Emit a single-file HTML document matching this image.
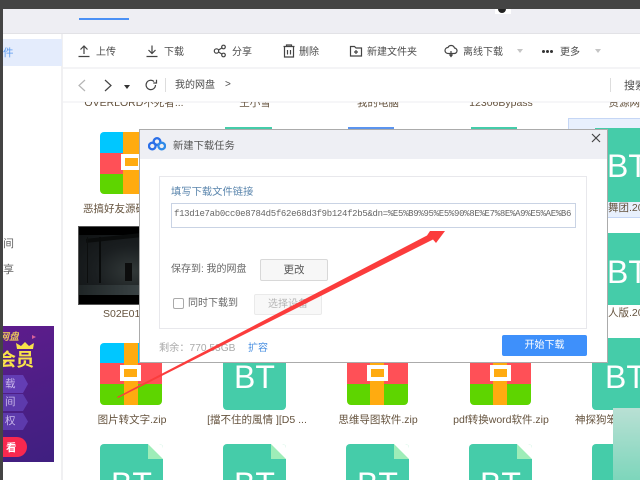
<!DOCTYPE html>
<html lang="zh">
<head>
<meta charset="utf-8">
<title>新建下载任务</title>
<style>
html,body{margin:0;padding:0;background:#fff;overflow:hidden;width:640px;height:480px}
#p{position:relative;width:640px;height:480px;overflow:hidden;background:#fff;font-family:"Liberation Sans","Noto Sans CJK SC",sans-serif;font-size:10px;color:#4c4c4c;filter:blur(.3px)}
#p div,#p span,#p svg{position:absolute}
#p span{white-space:nowrap;line-height:14px}
.lb{color:#65533e;font-size:10.5px;text-align:center;white-space:nowrap;line-height:14px}
.bt{background:#45cca9;border-radius:4px;color:#fff;overflow:hidden;font-size:32px;line-height:44px;text-align:center}
.fold{position:absolute;right:0;top:0;width:0;height:0;border-style:solid;border-width:0 15px 15px 0;border-color:#fff #fff #9eedb8 #9eedb8}
.btc{left:0;top:18px;width:63px;height:18px;overflow:hidden}
.ic{stroke:#444;fill:none;stroke-width:1.2}
.z{border-radius:4px;overflow:hidden;height:62px}
.z .a{left:0;top:0;width:100%;height:21px;background:#00c7ff}
.z .b{left:0;top:21px;width:100%;height:21px;background:#ff5057}
.z .c{left:0;top:42px;width:100%;height:20px;background:#5ed500}
.z .d{left:23px;top:0;width:14px;height:62px;background:#ffab10}
.z .e{left:20px;top:22px;width:21px;height:16px;background:#ffab10;box-sizing:border-box;border:4px solid #fff}
</style>
</head>
<body>
<div id="p">
<div style="left:0;top:0;width:640px;height:9px;background:#444"></div>
<div style="left:0;top:0;width:3px;height:480px;background:#444"></div>
<div style="left:3px;top:9px;width:637px;height:24px;background:#eeeef3"></div>
<div style="left:79px;top:18px;width:50px;height:2px;background:#4a90f5"></div>
<div style="left:495px;top:9px;width:16px;height:5px;background:#fff"></div>
<div style="left:498px;top:9px;width:8px;height:4px;background:#222;border-radius:0 0 4px 4px"></div>
<div style="left:3px;top:33px;width:637px;height:1px;background:#e2e2e6"></div>

<!-- sidebar -->
<div style="left:61px;top:34px;width:2px;height:446px;background:#f0f0f2"></div>
<div style="left:3px;top:39px;width:59px;height:27px;background:#e4ecfc"></div>
<span style="left:3px;top:46px;font-size:10.5px;color:#5b9bf0;width:11px;overflow:hidden">件</span>
<span style="left:3px;top:237px;width:11px;overflow:hidden;font-size:11px;color:#666">间</span>
<span style="left:3px;top:263px;width:11px;overflow:hidden;font-size:11px;color:#666">享</span>

<!-- ad -->
<div style="left:3px;top:326px;width:51px;height:136px;background:linear-gradient(160deg,#5e1c8c,#4b1f85 55%,#3f1f80)"></div>
<div style="left:3px;top:331px;width:16px;height:14px;overflow:hidden"><span style="left:-4px;top:0;font-size:10px;font-weight:bold;color:#e8c35c;font-style:italic">网盘</span></div>
<div style="left:32px;top:335px;border-left:4px solid #d9609a;border-top:2px solid transparent;border-bottom:2px solid transparent;width:0;height:0"></div>
<div style="left:3px;top:344px;width:31px;height:30px;overflow:hidden"><span style="left:-7px;top:4px;font-size:18px;font-weight:bold;color:#f8e34a;line-height:24px;padding-left:2px">会员</span></div>
<svg style="left:15px;top:341px" width="20" height="9" viewBox="0 0 20 9"><path d="M2 8L1 2l5 3 4-4 4 4 5-3-1 6z" fill="#f8e34a"/></svg>
<div style="left:3px;top:375px;width:25px;height:18px;background:#633db4;clip-path:polygon(0 0,80% 0,100% 50%,80% 100%,0 100%)"></div>
<div style="left:3px;top:394px;width:25px;height:17px;background:#5d3aac;clip-path:polygon(0 0,80% 0,100% 50%,80% 100%,0 100%)"></div>
<div style="left:3px;top:413px;width:25px;height:17px;background:#5d3aac;clip-path:polygon(0 0,80% 0,100% 50%,80% 100%,0 100%)"></div>
<span style="left:5px;top:377px;font-size:10.5px;color:#c9b8ea">载</span>
<span style="left:5px;top:395px;font-size:10.5px;color:#c9b8ea">间</span>
<span style="left:5px;top:414px;font-size:10.5px;color:#c9b8ea">权</span>
<div style="left:3px;top:437px;width:24px;height:20px;background:#f8284f;border-radius:0 10px 10px 0"></div>
<span style="left:6px;top:441px;font-size:10.5px;font-weight:bold;color:#fff">看</span>

<!-- toolbar -->
<div style="left:63px;top:67px;width:577px;height:2px;background:#f4f4f6"></div>
<div style="left:63px;top:101px;width:577px;height:2px;background:#f6f6f8"></div>
<svg style="left:77px;top:44px" width="14" height="14" viewBox="0 0 14 14"><path class="ic" d="M7 10V2M3.500 5.500L7 2l3.500 3.500M1.500 12.500h11"/></svg>
<span style="left:96px;top:46px">上传</span>
<svg style="left:145px;top:44px" width="14" height="14" viewBox="0 0 14 14"><path class="ic" d="M7 1.500V9M3.500 6L7 9.500 10.500 6M1.500 12.500h11"/></svg>
<span style="left:164px;top:46px">下载</span>
<svg style="left:213px;top:44px" width="14" height="14" viewBox="0 0 14 14"><circle class="ic" cx="3.500" cy="7" r="2.200"/><circle class="ic" cx="10.500" cy="3" r="1.800"/><circle class="ic" cx="10.500" cy="11" r="1.800"/><path class="ic" d="M5.500 6l3.300-2M5.500 8l3.300 2"/></svg>
<span style="left:232px;top:46px">分享</span>
<svg style="left:282px;top:44px" width="14" height="14" viewBox="0 0 14 14"><path class="ic" d="M1.500 2.500h11M4.500 2.500V1h5v1.500M2.500 3v10h9V3M5.500 6v4.500M8.500 6v4.500"/></svg>
<span style="left:299px;top:46px">删除</span>
<svg style="left:349px;top:44px" width="14" height="14" viewBox="0 0 14 14"><path class="ic" d="M1.500 2.500h4l1.500 1.500h5.500v8h-11zM7 6v4M5 8h4"/></svg>
<span style="left:367px;top:46px">新建文件夹</span>
<svg style="left:444px;top:44px" width="14" height="14" viewBox="0 0 14 14"><path class="ic" d="M4 9.500a3 3 0 0 1 0-6 3.500 3.500 0 0 1 6.500 .5 2.700 2.700 0 0 1-.5 5.500zM7 7v5M5.500 10.500L7 12.500l1.500-2"/></svg>
<span style="left:463px;top:46px">离线下载</span>
<div style="left:517px;top:49px;border:3px solid transparent;border-top:4px solid #c5c5c5;border-bottom:0;width:0;height:0"></div>
<div style="left:542px;top:50px;width:3px;height:3px;background:#333;box-shadow:4px 0 #333,8px 0 #333;border-radius:50%"></div>
<span style="left:560px;top:46px">更多</span>
<div style="left:595px;top:49px;border:3px solid transparent;border-top:4px solid #c5c5c5;border-bottom:0;width:0;height:0"></div>

<!-- nav -->
<svg style="left:76px;top:78px" width="12" height="15" viewBox="0 0 12 15"><path d="M9 2L3 7.500 9 13" fill="none" stroke="#b5b5b5" stroke-width="1.200"/></svg>
<svg style="left:102px;top:78px" width="12" height="15" viewBox="0 0 12 15"><path d="M3 2l6 5.500L3 13" fill="none" stroke="#444" stroke-width="1.200"/></svg>
<div style="left:124px;top:85px;border:3px solid transparent;border-top:4px solid #333;border-bottom:0;width:0;height:0"></div>
<svg style="left:144px;top:78px" width="14" height="14" viewBox="0 0 14 14"><path d="M11.500 7a4.700 4.700 0 1 1-1.500-3.500M12.500 1.800V5H9.300" fill="none" stroke="#444" stroke-width="1.200"/></svg>
<div style="left:165px;top:78px;width:1px;height:14px;background:#ddd"></div>
<span style="left:175px;top:79px">我的网盘</span>
<span style="left:225px;top:78px">&gt;</span>
<div style="left:610px;top:78px;width:1px;height:14px;background:#ddd"></div>
<span style="left:624px;top:79px;font-size:11px">搜索</span>

<!-- row 0 labels -->
<div style="left:63px;top:102px;width:577px;height:6px;overflow:hidden">
<div class="lb" style="position:absolute;left:21px;top:-6px;width:100px;height:12px">OVERLORD不死者...</div>
<div class="lb" style="position:absolute;left:162px;top:-6px;width:60px;height:12px">王小雪</div>
<div class="lb" style="position:absolute;left:275px;top:-6px;width:80px;height:12px">我的电脑</div>
<div class="lb" style="position:absolute;left:398px;top:-6px;width:80px;height:12px">12306Bypass</div>
<div class="lb" style="position:absolute;left:517px;top:-6px;width:60px;height:12px;text-align:right">资源网</div>
</div>

<!-- selection -->
<div style="left:568px;top:118px;width:72px;height:100px;box-sizing:border-box;background:#e8f0fd;border:1px solid #c5d6f5;border-right:0"></div>

<!-- row0 tops -->
<div style="left:225px;top:127px;width:47px;height:2px;background:#45cca9"></div>
<div style="left:348px;top:127px;width:46px;height:2px;background:#5b94ee"></div>
<div style="left:471px;top:127px;width:46px;height:2px;background:#45cca9"></div>

<!-- zip r1 -->
<div class="z" style="left:100px;top:132px;width:62px"><div class="a"></div><div class="b"></div><div class="c"></div><div class="d" style="left:23px;width:16px"></div><div class="e" style="left:21px"></div></div>
<div class="lb" style="position:absolute;left:83px;top:202px;width:56px;overflow:hidden;text-align:left">恶搞好友源码</div>

<!-- video -->
<div style="left:78px;top:226px;width:62px;height:79px;background:#000;box-sizing:border-box;border:1px solid #555;overflow:hidden">
 <div style="left:0;top:8px;width:62px;height:60px;background:radial-gradient(ellipse at 85% 60%,#323939,#1a1e20 50%,#101314)"></div>
 <div style="left:7px;top:9px;width:55px;height:4px;background:#0a0c0c;transform:rotate(-6deg)"></div>
 <div style="left:20px;top:10px;width:2px;height:46px;background:#090b0b"></div>
 <div style="left:8px;top:10px;width:1px;height:46px;background:#0c0e0e"></div>
 <div style="left:46px;top:36px;width:7px;height:18px;background:#0c0d0d"></div>
 <div style="left:0;top:58px;width:62px;height:10px;background:linear-gradient(90deg,#1f2526,#3b4446)"></div>
</div>
<div class="lb" style="position:absolute;left:103px;top:307px;width:36px;overflow:hidden;text-align:left">S02E01</div>

<!-- row 3 -->
<div class="z" style="left:100px;top:343px;width:62px"><div class="a" style="height:20px"></div><div class="b" style="top:20px"></div><div class="c" style="top:41px;height:21px"></div><div class="d" style="left:24px"></div><div class="e"></div></div>
<div class="bt" style="left:223px;top:340px;width:63px;height:70px"><div style="left:0;top:15px;width:63px;text-align:center">BT</div></div>
<div class="z" style="left:347px;top:343px;width:61px"><div class="a" style="height:20px"></div><div class="b" style="top:20px"></div><div class="c" style="top:41px;height:21px"></div><div class="d"></div><div class="e"></div></div>
<div class="z" style="left:470px;top:343px;width:61px"><div class="a" style="height:20px"></div><div class="b" style="top:20px"></div><div class="c" style="top:41px;height:21px"></div><div class="d"></div><div class="e"></div></div>
<div class="bt" style="left:592px;top:338px;width:48px;height:72px;border-radius:4px 0 0 4px;text-align:left"><div style="left:13px;top:17px">BT</div></div>
<div class="lb" style="position:absolute;left:89px;top:413px;width:86px">图片转文字.zip</div>
<div class="lb" style="position:absolute;left:197px;top:413px;width:120px">[擋不住的風情 ][D5 ...</div>
<div class="lb" style="position:absolute;left:328px;top:413px;width:100px">思维导图软件.zip</div>
<div class="lb" style="position:absolute;left:441px;top:413px;width:120px">pdf转换word软件.zip</div>
<div class="lb" style="position:absolute;left:575px;top:413px;width:65px;text-align:left;overflow:hidden">神探狗笨探</div>

<!-- row 4 -->
<div class="bt" style="left:100px;top:444px;width:63px;height:36px;border-radius:4px 4px 0 0"><div class="fold"></div><div class="btc">BT</div></div>
<div class="bt" style="left:223px;top:444px;width:63px;height:36px;border-radius:4px 4px 0 0"><div class="fold"></div><div class="btc">BT</div></div>
<div class="bt" style="left:346px;top:444px;width:63px;height:36px;border-radius:4px 4px 0 0"><div class="fold"></div><div class="btc">BT</div></div>
<div class="bt" style="left:469px;top:444px;width:63px;height:36px;border-radius:4px 4px 0 0"><div class="fold"></div><div class="btc">BT</div></div>
<div class="bt" style="left:592px;top:444px;width:48px;height:36px;border-radius:4px 0 0 0"></div>

<!-- right col behind dialog -->
<div style="left:595px;top:128px;width:45px;height:74px;background:#45cca9"></div>
<span style="left:607px;top:144px;color:#fff;font-size:32px;line-height:44px">BT</span>
<div style="left:592px;top:233px;width:48px;height:72px;background:#45cca9"></div>
<span style="left:607px;top:250px;color:#fff;font-size:32px;line-height:44px">BT</span>
<span style="left:608px;top:201px;color:#65533e;font-size:10.5px">舞团.20</span>
<span style="left:608px;top:306px;color:#65533e;font-size:10.5px">人版.20</span>

<!-- watermark corner -->
<div style="left:613px;top:408px;width:27px;height:72px;background:linear-gradient(180deg,#b9e0d4,#7dd6bb)"></div>

<!-- dialog -->
<div style="left:139px;top:129px;width:469px;height:234px;box-sizing:border-box;background:#fff;border:1px solid #ababab">
 <div style="left:0;top:0;width:467px;height:29px;background:#eeeff4"></div>
</div>
<svg style="left:148px;top:136px" width="18" height="16" viewBox="0 0 18 16"><circle cx="9" cy="5.500" r="3.300" fill="none" stroke="#2a6fe8" stroke-width="2.300"/><circle cx="4.300" cy="10" r="3.300" fill="none" stroke="#2a6fe8" stroke-width="2.300"/><circle cx="13.700" cy="10" r="3.300" fill="none" stroke="#2f8ae8" stroke-width="2.300"/></svg>
<span style="left:173px;top:140px;color:#555;font-size:10.300px">新建下载任务</span>
<svg style="left:590px;top:132px" width="12" height="12" viewBox="0 0 12 12"><path d="M2 2l8 8M10 2l-8 8" stroke="#444" stroke-width="1.200" fill="none"/></svg>

<div style="left:159px;top:176px;width:428px;height:153px;box-sizing:border-box;border:1px solid #e8e8ec;background:#fff"></div>
<span style="left:171px;top:186px;color:#5b86ad;font-size:10.300px">填写下载文件链接</span>
<div style="left:171px;top:203px;width:405px;height:25px;box-sizing:border-box;border:1px solid #c9d3e4;background:#fff"></div>
<span style="left:174px;top:207px;width:398px;overflow:hidden;font-family:'Liberation Mono',monospace;font-size:9px;letter-spacing:-.31px;color:#666">f13d1e7ab0cc0e8784d5f62e68d3f9b124f2b5&amp;dn=%E5%B9%95%E5%90%8E%E7%8E%A9%E5%AE%B6</span>

<span style="left:171px;top:263px;color:#666;font-size:10px">保存到: 我的网盘</span>
<div style="left:260px;top:259px;width:68px;height:22px;box-sizing:border-box;border:1px solid #d8d8d8;border-radius:2px;background:#f7f7f7;text-align:center;line-height:20px;color:#555;font-size:10.500px">更改</div>
<div style="left:173px;top:298px;width:11px;height:11px;box-sizing:border-box;border:1px solid #aaa;border-radius:2px;background:#fff"></div>
<span style="left:188px;top:297px;color:#666;font-size:10px">同时下载到</span>
<div style="left:254px;top:294px;width:68px;height:21px;box-sizing:border-box;border:1px solid #eaeaea;border-radius:2px;background:#f8f8f8;text-align:center;line-height:19px;color:#b5b5b5;font-size:10px">选择设备</div>
<span style="left:159px;top:342px;color:#aaa;font-size:10.200px">剩余：770.53GB</span>
<span style="left:248px;top:342px;color:#4a90e2;font-size:10px">扩容</span>
<div style="left:502px;top:335px;width:85px;height:21px;background:#3e90fb;border-radius:2px;text-align:center;line-height:21px;color:#fff;font-size:10px">开始下载</div>

<!-- arrow -->
<svg style="left:0;top:0" width="640" height="480" viewBox="0 0 640 480"><path d="M117 397L427 235.500 430 231 445 231 436 243 433 239.500 118 398z" fill="#fb3c3c"/></svg>
</div>
</body>
</html>
